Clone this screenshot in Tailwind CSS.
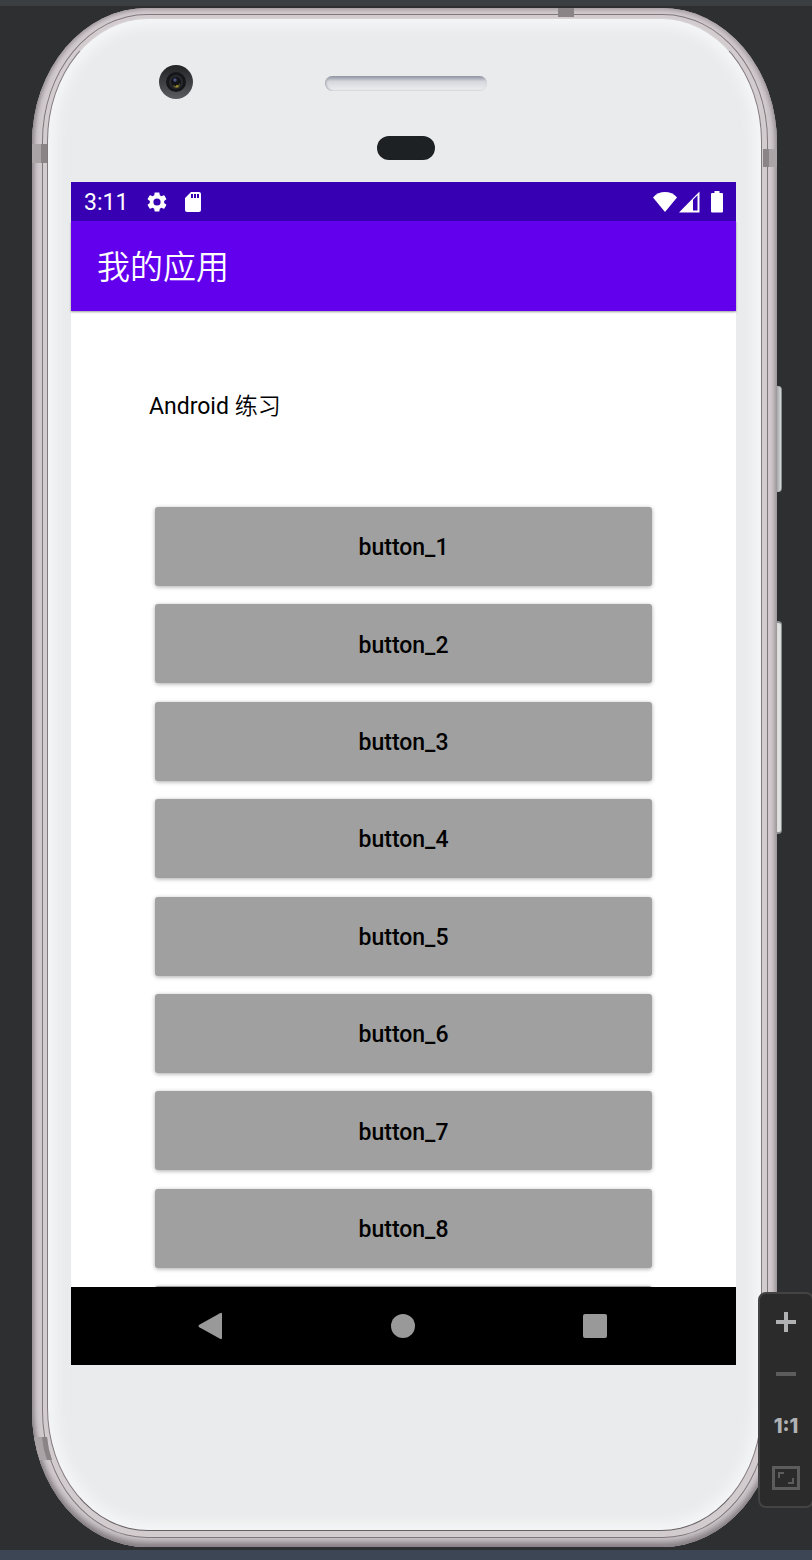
<!DOCTYPE html>
<html lang="zh-CN">
<head>
<meta charset="utf-8">
<meta name="viewport" content="width=device-width, initial-scale=1">
<title>我的应用</title>
<script src="https://cdn.jsdelivr.net/npm/@tailwindcss/browser@4"></script>
</head>
<body class="bg-[#2d2f31] font-['Roboto','Noto_Sans_CJK_SC',sans-serif]">
<div class="relative min-h-screen flex flex-col overflow-hidden">
  <div class="h-[6px] bg-[#3c3f41]"></div>

  <!-- Phone -->
  <div class="relative mt-[2px] mb-[3px] ml-8 mr-[35px]">
    <!-- Power and volume keys -->
    <div class="absolute -right-[5px] top-[378px] w-[7px] h-[106px] rounded-r-sm border-r border-[#8c8f90] bg-linear-to-r from-[#8d9191] to-[#d5d9da]"></div>
    <div class="absolute -right-[5px] top-[613px] w-[7px] h-[213px] rounded-r-sm border-r border-y-2 border-[#8c8f90] bg-linear-to-r from-[#a4a6a5] via-[#e4e6e3] to-[#d5d9d7]"></div>

    <!-- Metal rim -->
    <div class="relative overflow-hidden rounded-[115px/135px] bg-[#d1cacd] pt-[6px] pr-[9px] pb-[9px] pl-[10px] shadow-[inset_0_-5px_7px_#837c81,inset_2px_0_4px_#a39b9f,inset_-2px_2px_4px_#b5adb1]">
      <div class="rounded-[105px/127px] border border-[#80777c] bg-[#d3cccf] pt-[3px] pr-[5px] pb-[6px] pl-[4px]">
        <div class="rounded-[101px/123px] border border-t-[#d8d2d5] border-x-[#82797e] border-b-[#666064] bg-[#eaebec] shadow-[inset_0_0_12px_8px_#f4f5f6]">

          <!-- Camera, speaker, sensor -->
          <div class="relative h-[163px] flex flex-col items-center pl-[2px]">
            <div class="absolute left-[111px] top-[46px] size-[34px] rounded-full bg-linear-to-b from-[#222325] to-[#5b5c60] flex items-center justify-center">
              <div class="size-[20px] rounded-full bg-[#15161a] flex items-center justify-center">
                <svg class="size-[18px]" viewBox="0 0 18 18" aria-hidden="true"><circle cx="9" cy="9" r="7" fill="#292a2d"/><circle cx="9" cy="9" r="5" fill="#131418"/><circle cx="8" cy="7" r="1.7" fill="#50558a"/><path d="M6 12c3 2 5 1 7-2l-1 4c-2 2-5 1-6-2z" fill="#6c6726"/><circle cx="10" cy="13" r="1" fill="#a79339"/></svg>
              </div>
            </div>
            <div class="mt-[57px] w-[162px] h-[15px] rounded-full bg-linear-to-b from-[#8e919f] via-[#d4d6dc] via-35% to-[#eff0f1] shadow-[inset_1px_0_2px_#a0a3ad]"></div>
            <div class="mt-[45px] w-[58px] h-[24px] rounded-full bg-[#1e2124]"></div>
          </div>

          <!-- Screen -->
          <div class="ml-[23px] mr-[25px] bg-white text-black">
            <div class="h-[39px] bg-[#3700b3] text-white flex items-center pl-[13px] pr-[13px]">
              <span class="text-[23px] leading-[39px] w-[61px] pt-[2px]">3:11</span>
              <svg class="size-[24px]" viewBox="0 0 24 24" fill="currentColor" aria-hidden="true"><path d="M19.14 12.94c.04-.3.06-.61.06-.94s-.02-.64-.07-.94l2.03-1.58c.18-.14.23-.41.12-.61l-1.92-3.32c-.12-.22-.37-.29-.59-.22l-2.39.96c-.5-.38-1.03-.7-1.62-.94l-.36-2.54c-.04-.24-.24-.41-.48-.41h-3.84c-.24 0-.43.17-.47.41l-.36 2.54c-.59.24-1.13.57-1.62.94l-2.39-.96c-.22-.08-.47 0-.59.22L2.74 8.87c-.12.21-.08.47.12.61l2.03 1.58c-.05.3-.09.63-.09.94s.02.64.07.94l-2.03 1.58c-.18.14-.23.41-.12.61l1.92 3.32c.12.22.37.29.59.22l2.39-.96c.5.38 1.03.7 1.62.94l.36 2.54c.05.24.24.41.48.41h3.84c.24 0 .44-.17.47-.41l.36-2.54c.59-.24 1.13-.56 1.62-.94l2.39.96c.22.08.47 0 .59-.22l1.92-3.32c.12-.22.07-.47-.12-.61zM12 15.6A3.6 3.6 0 1 1 12 8.4a3.6 3.6 0 0 1 0 7.2z"/></svg>
              <svg class="size-[24px] ml-[12px]" viewBox="0 0 24 24" fill="currentColor" aria-hidden="true"><path d="M18 2h-8L4 8v12c0 1.100.9 2 2 2h12c1.100 0 2-.9 2-2V4c0-1.100-.9-2-2-2zm-6 6h-2V4h2zm3 0h-2V4h2zm3 0h-2V4h2z"/></svg>
              <svg class="w-[24px] h-[22px] ml-auto" viewBox="0 0 24 22" fill="currentColor" aria-hidden="true"><path d="M12 21 0 6.500C6-.8 18-.8 24 6.500z"/></svg>
              <svg class="w-[21px] h-[22px] ml-[2px]" viewBox="0 0 21 22" fill="currentColor" aria-hidden="true"><path fill-rule="evenodd" d="M0 21.500 20.500.5v21zM14 8.700v10.800h4.500V4.200z"/></svg>
              <svg class="w-[12px] h-[22px] ml-[11px]" viewBox="0 0 12 22" fill="currentColor" aria-hidden="true"><path d="M3.500 0h5v2H11q1 0 1 1v17.500q0 1-1 1H1q-1 0-1-1V3q0-1 1-1h2.500z"/></svg>
            </div>
            <header class="relative h-[90px] bg-[#6200ee] text-white flex items-center pl-[26px] pt-[4px] shadow-[0_1px_2px_#00000066]">
              <h1 class="text-[33px] leading-[48px] font-[350]">我的应用</h1>
            </header>

            <main class="h-[976px] overflow-hidden px-[78px] pt-[80px]">
              <p class="text-[23px] leading-8">Android <span class="font-[350]">练习</span></p>
              <div class="mt-[84px] mx-[6px] h-[858px] flex flex-col justify-between text-[23px] font-medium">
                <button type="button" class="h-[79px] pt-[4px] rounded-[3px] bg-[#a0a0a0] shadow-[0_1px_4px_#00000055]">button_1</button>
                <button type="button" class="h-[79px] pt-[4px] rounded-[3px] bg-[#a0a0a0] shadow-[0_1px_4px_#00000055]">button_2</button>
                <button type="button" class="h-[79px] pt-[4px] rounded-[3px] bg-[#a0a0a0] shadow-[0_1px_4px_#00000055]">button_3</button>
                <button type="button" class="h-[79px] pt-[4px] rounded-[3px] bg-[#a0a0a0] shadow-[0_1px_4px_#00000055]">button_4</button>
                <button type="button" class="h-[79px] pt-[4px] rounded-[3px] bg-[#a0a0a0] shadow-[0_1px_4px_#00000055]">button_5</button>
                <button type="button" class="h-[79px] pt-[4px] rounded-[3px] bg-[#a0a0a0] shadow-[0_1px_4px_#00000055]">button_6</button>
                <button type="button" class="h-[79px] pt-[4px] rounded-[3px] bg-[#a0a0a0] shadow-[0_1px_4px_#00000055]">button_7</button>
                <button type="button" class="h-[79px] pt-[4px] rounded-[3px] bg-[#a0a0a0] shadow-[0_1px_4px_#00000055]">button_8</button>
                <button type="button" class="h-[79px] pt-[4px] rounded-[3px] bg-[#a0a0a0] shadow-[0_1px_4px_#00000055]" aria-label="button_9"></button>
              </div>
            </main>

            <nav class="h-[78px] bg-black flex justify-center pr-[2px] text-[#999]" aria-label="系统导航">
              <button type="button" class="w-48 flex items-center justify-center" aria-label="返回"><svg class="w-[26px] h-[28px]" viewBox="0 0 26 28" fill="currentColor" aria-hidden="true"><path d="M.5 14q0-.7.8-1.300L22 1.200q2-1 2 .8v24q0 1.800-2 .8L1.300 15.300Q.5 14.700.5 14z"/></svg></button>
              <button type="button" class="w-48 flex items-center justify-center" aria-label="主页"><span class="size-[24px] rounded-full bg-current"></span></button>
              <button type="button" class="w-48 flex items-center justify-center" aria-label="最近任务"><span class="size-[24px] rounded-[2px] bg-current"></span></button>
            </nav>
          </div>
          <div class="h-[165px]"></div>
        </div>
      </div>

      <!-- Antenna bands -->
      <div class="absolute left-0 top-[136px] w-[15px] h-[19px] bg-linear-to-r from-[#aaa4a7] from-60% to-[#8b8487] to-60%"></div>
      <div class="absolute right-0 top-[141px] w-[14px] h-[18px] bg-linear-to-r from-[#8b8487] from-45% to-[#aaa4a7] to-45%"></div>
      <div class="absolute left-[526px] top-0 w-[16px] h-[9px] bg-[#8b8487]"></div>
      <svg class="absolute left-0 bottom-[87px] w-[20px] h-[23px]" viewBox="0 0 20 23" aria-hidden="true"><path d="M0 0h15q1 12 5 23H0z" fill="#aaa4a7"/><path d="M10 0h5q1 12 5 23h-5q-4-11-5-23z" fill="#8b8487"/></svg>
    </div>
  </div>

  <div class="grow min-h-[10px] bg-[#3c4655]"></div>

  <!-- Zoom controls floating over the emulator -->
  <div class="absolute -right-[2px] bottom-[52px] w-[56px] h-[216px] rounded-[8px] border-2 border-[#434343] bg-[#2b2b2b] flex flex-col items-center py-[2px] text-[#afb1b3]" role="toolbar">
    <button type="button" class="w-full h-[52px] flex items-center justify-center" aria-label="放大"><svg class="size-[20px]" viewBox="0 0 20 20" fill="currentColor" aria-hidden="true"><path d="M8 0h4v8h8v4h-8v8H8v-8H0V8h8z"/></svg></button>
    <button type="button" class="w-full h-[52px] flex items-center justify-center text-[#5c5c5c]" aria-label="缩小"><span class="w-[20px] h-[4px] bg-current"></span></button>
    <button type="button" class="w-full h-[52px] font-['Inter',sans-serif] text-[20px] font-extrabold">1:1</button>
    <button type="button" class="w-full h-[52px] flex items-center justify-center text-[#5c5c5c]" aria-label="适应窗口"><svg class="w-[28px] h-[24px]" viewBox="0 0 28 24" fill="currentColor" aria-hidden="true"><path fill-rule="evenodd" d="M0 0h28v24H0zM3 3v18h22V3z"/><path d="M6 6h6v2H8v4H6zM22 18h-6v-2h4v-4h2z"/></svg></button>
  </div>
</div>
</body>
</html>
